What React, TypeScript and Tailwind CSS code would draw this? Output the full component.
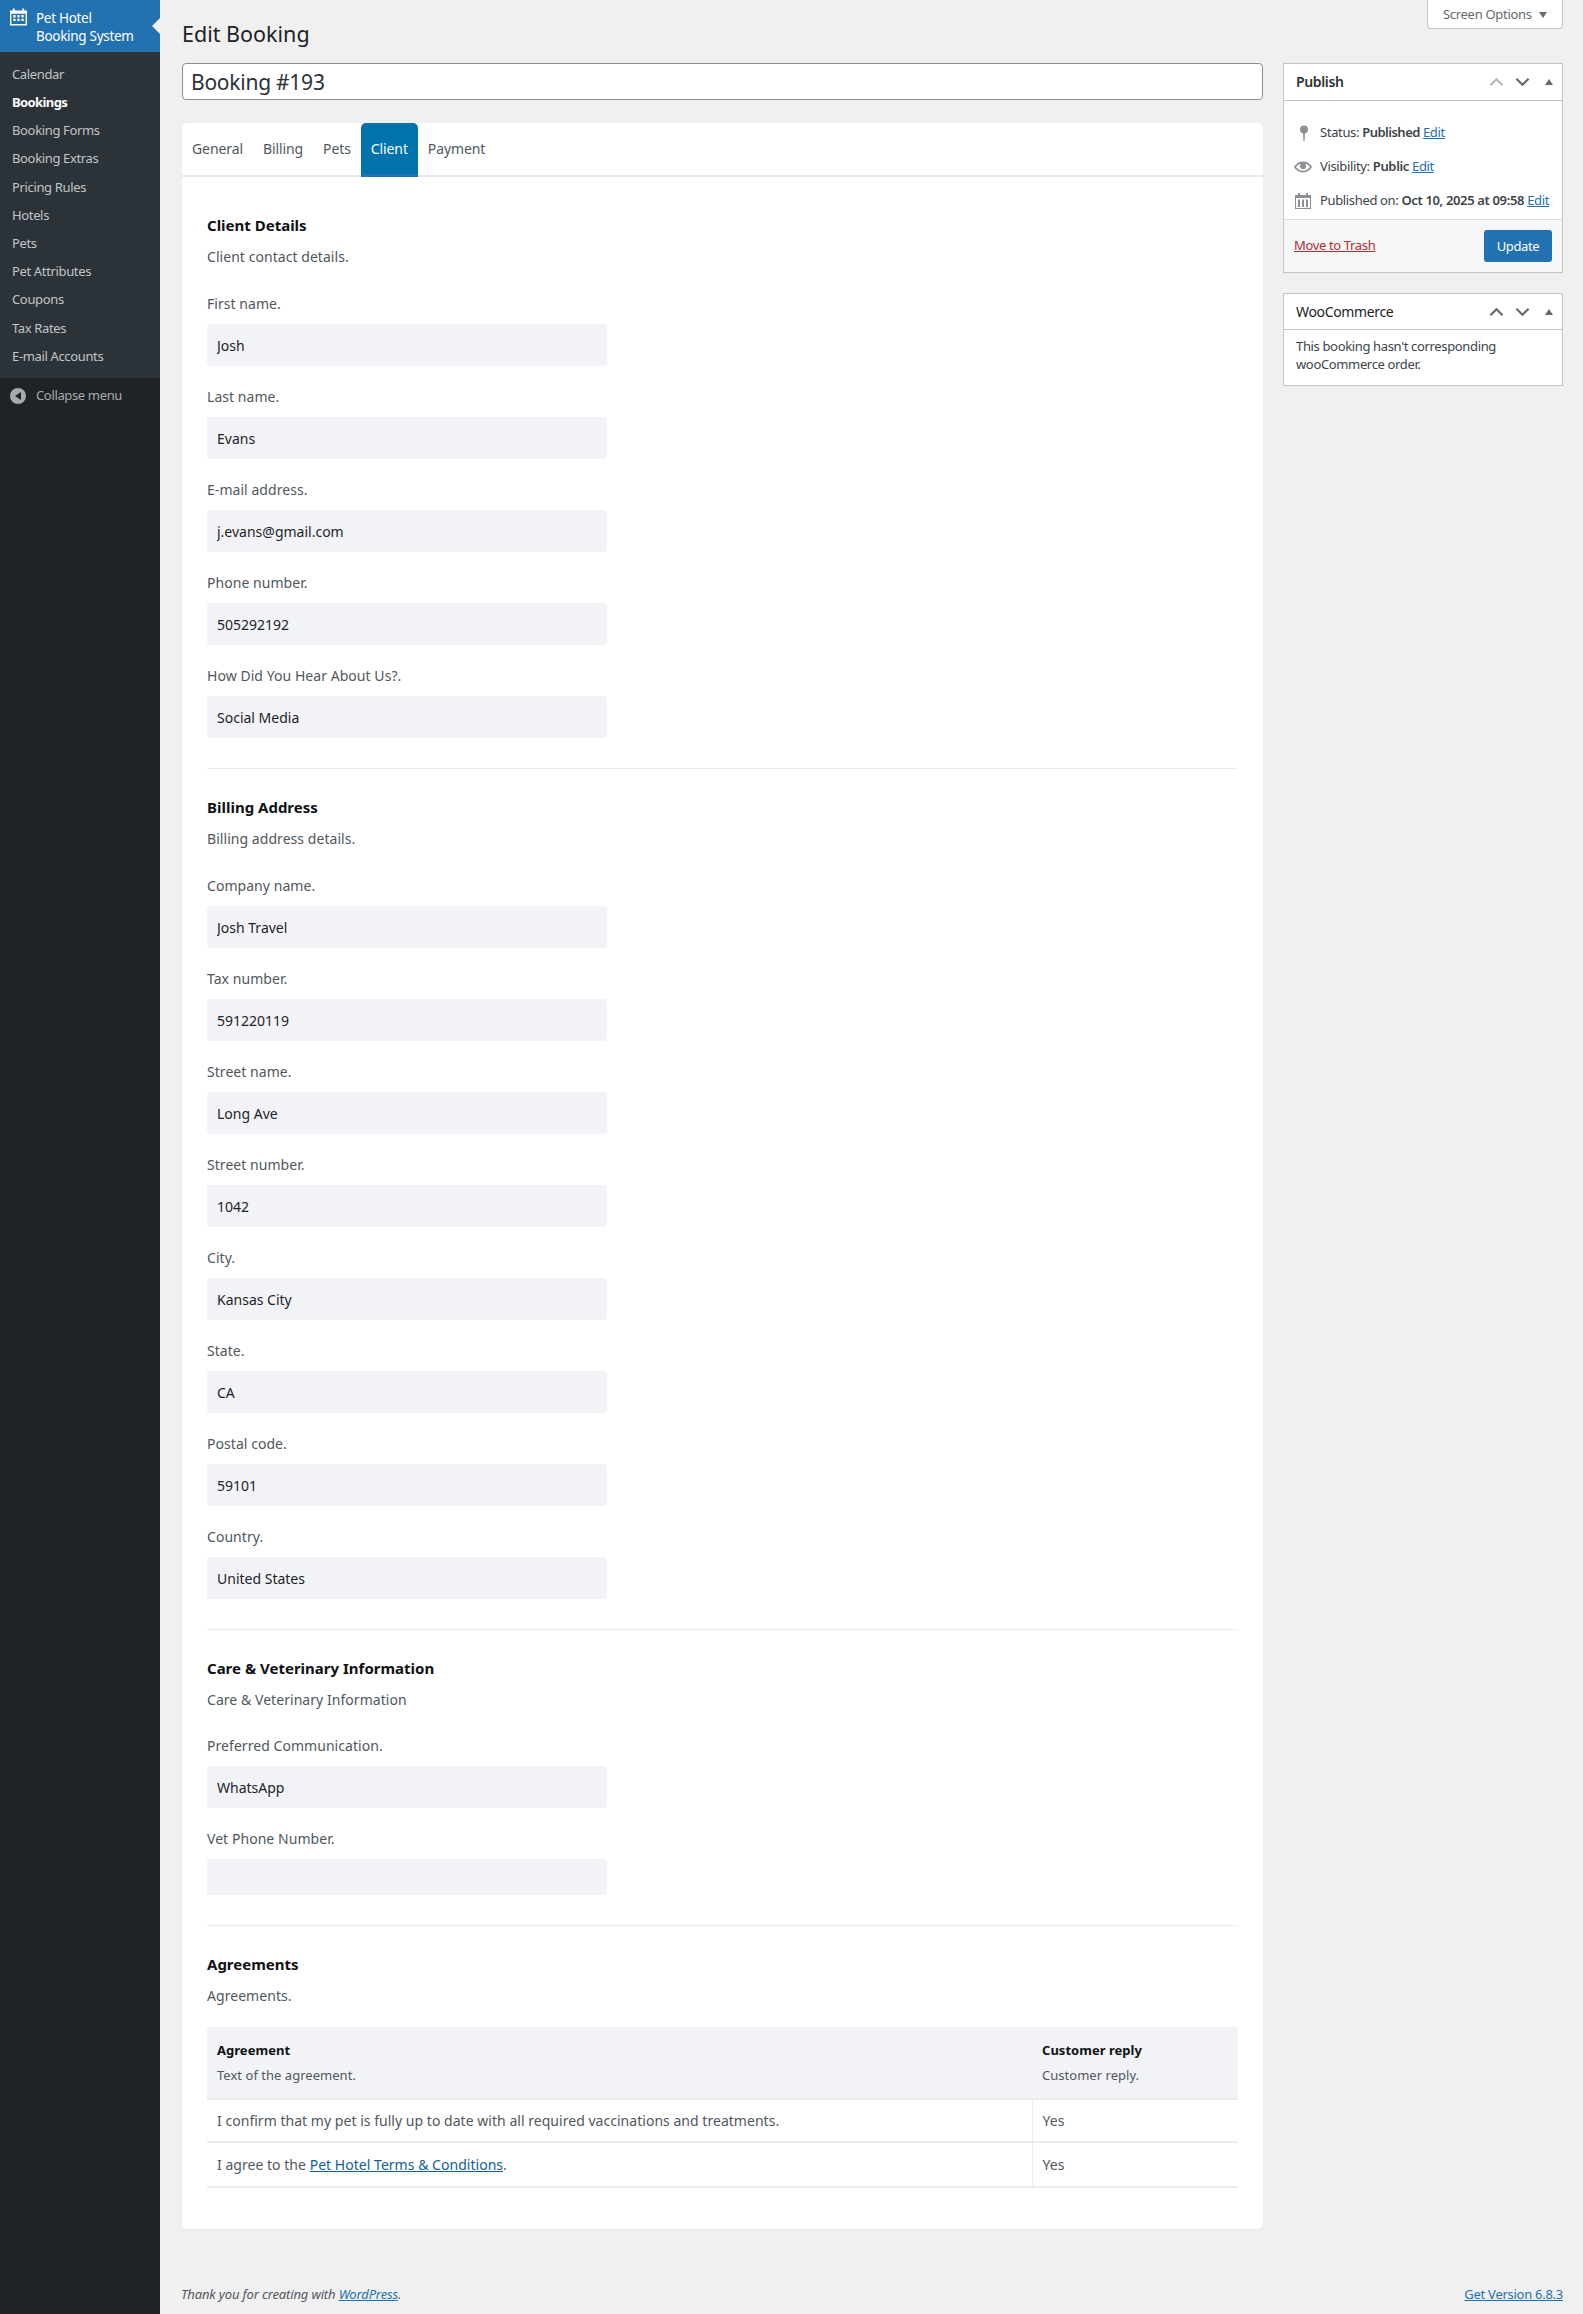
const font = { fontFamily: '"Noto Sans", sans-serif' };

const menu = ['Calendar', 'Bookings', 'Booking Forms', 'Booking Extras', 'Pricing Rules', 'Hotels', 'Pets', 'Pet Attributes', 'Coupons', 'Tax Rates', 'E-mail Accounts'];
const tabs = ['General', 'Billing', 'Pets', 'Client', 'Payment'];

const sections = [
  {
    title: 'Client Details',
    sub: 'Client contact details.',
    gap: 'mt-[27px] flex flex-col gap-[21px]',
    fields: [
      ['First name.', 'Josh'],
      ['Last name.', 'Evans'],
      ['E-mail address.', 'j.evans@gmail.com'],
      ['Phone number.', '505292192'],
      ['How Did You Hear About Us?.', 'Social Media'],
    ],
  },
  {
    title: 'Billing Address',
    sub: 'Billing address details.',
    gap: 'mt-[27px] flex flex-col gap-[21px]',
    fields: [
      ['Company name.', 'Josh Travel'],
      ['Tax number.', '591220119'],
      ['Street name.', 'Long Ave'],
      ['Street number.', '1042'],
      ['City.', 'Kansas City'],
      ['State.', 'CA'],
      ['Postal code.', '59101'],
      ['Country.', 'United States'],
    ],
  },
  {
    title: 'Care & Veterinary Information',
    sub: 'Care & Veterinary Information',
    gap: 'mt-[26px] flex flex-col gap-[21px]',
    fields: [
      ['Preferred Communication.', 'WhatsApp'],
      ['Vet Phone Number.', ''],
    ],
  },
];

function CalendarAlt({ className }: { className: string }) {
  return (
    <svg viewBox="1 1 18 18" className={className} fill="currentColor">
      <path fillRule="evenodd" d="M4 1h2v2h8V1h2v2h3v16H1V3h3V1zM2.500 6.500v11h15v-11h-15zM4.500 8h2.400v2.400H4.500zm4.300 0h2.400v2.400H8.800zm4.300 0h2.400v2.400h-2.400zM4.500 11.800h2.400v2.400H4.500zm4.300 0h2.400v2.400H8.800zm4.300 0h2.400v2.400h-2.400z" />
    </svg>
  );
}

function BoxControls({ dim }: { dim?: boolean }) {
  return (
    <div className="flex items-center">
      <svg viewBox="0 0 16 10" className={`w-[15px] h-[10px] ${dim ? 'text-[#b4b7ba]' : 'text-[#646970]'}`} fill="none" stroke="currentColor" strokeWidth="2.2">
        <path d="M1.500 8.500 8 2l6.500 6.500" />
      </svg>
      <svg viewBox="0 0 16 10" className="w-[15px] h-[10px] ml-[11px] text-[#646970]" fill="none" stroke="currentColor" strokeWidth="2.2">
        <path d="M1.500 1.500 8 8l6.500-6.500" />
      </svg>
      <svg viewBox="0 0 8 6" className="w-[8px] h-[6px] ml-[15px] mr-[9px] text-[#646970]" fill="currentColor">
        <path d="M4 0l4 6H0z" />
      </svg>
    </div>
  );
}

function Input({ value }: { value: string }) {
  return (
    <input
      readOnly
      value={value}
      style={font}
      className={`block w-[400px] ${value ? 'h-[42px]' : 'h-[36px]'} mt-[10px] rounded-[4px] bg-[#f2f3f7] px-[10px] text-[14px] text-[#1d2327] outline-none`}
    />
  );
}

function Heading({ title, sub }: { title: string; sub: string }) {
  return (
    <>
      <h3 className="text-[15px] leading-[17px] pb-[3px] font-bold text-[#0f1114]">{title}</h3>
      <p className="mt-[10px] text-[14px] leading-[20px] tracking-[0.05px] text-[#50575e]">{sub}</p>
    </>
  );
}

export default function App() {
  return (
    <div style={font} className="flex h-[2314px] w-full bg-[#f0f0f1] text-[13px] text-[#3c434a] overflow-hidden">
      <aside className="w-[160px] shrink-0 flex flex-col bg-[#1d2327]">
        <div className="relative h-[52px] bg-[#2271b1] flex text-white text-[13.5px] leading-[18px] tracking-[-0.3px]">
          <CalendarAlt className="w-[17px] h-[18px] mt-[8px] ml-[10px] text-white" />
          <div className="ml-[9px] mt-[9px]">Pet Hotel<br />Booking System</div>
          <span className="absolute right-0 top-[18px] border-y-[8px] border-r-[8px] border-y-transparent border-r-[#f0f0f1]" />
        </div>
        <nav className="bg-[#2c3338] py-[8px]">
          {menu.map((m) => (
            <div key={m} className={`h-[28.2px] px-[12px] pt-[1px] flex items-center text-[13px] ${m === 'Bookings' ? 'font-bold text-white tracking-[-0.6px]' : 'text-[#c3c4c7] tracking-[-0.35px]'}`}>
              {m}
            </div>
          ))}
        </nav>
        <div className="flex items-center h-[36px] pl-[10px] text-[#a7aaad] tracking-[-0.35px]">
          <span className="w-[16px] h-[16px] rounded-full bg-[#a7aaad] flex items-center justify-center">
            <span className="border-y-[4px] border-r-[6px] border-y-transparent border-r-[#1d2327] -ml-[1px]" />
          </span>
          <span className="ml-[10px]">Collapse menu</span>
        </div>
      </aside>

      <main className="flex-1 min-w-0 flex flex-col pl-[22px] pr-[20px]">
        <div className="flex justify-between h-[63px]">
          <h1 className="pt-[19px] text-[21.5px] leading-[30px] text-[#1d2327]">Edit Booking</h1>
          <div className="w-[136px] h-[29px] pt-[1px] bg-white border border-t-0 border-[#c3c4c7] rounded-b-[4px] flex items-center pl-[15px] text-[#646970] tracking-[-0.3px]">
            Screen Options
            <span className="ml-[7px] border-x-[4px] border-t-[6px] border-x-transparent border-t-[#646970]" />
          </div>
        </div>

        <div className="flex gap-[20px] items-start">
          <div className="w-[1081px] shrink-0">
            <input
              readOnly
              value="Booking #193"
              style={font}
              className="block w-full h-[37px] px-[8px] bg-white border border-[#8c8f94] rounded-[4px] text-[21px] tracking-[-0.25px] text-[#2c3338] outline-none"
            />

            <div className="mt-[23px] bg-white rounded-[5px] shadow-[0_1px_1px_rgba(0,0,0,0.04)]">
              <div className="flex h-[54px] border-b-2 border-[#e9eaee]">
                {tabs.map((t) => (
                  <div
                    key={t}
                    className={`h-[54px] px-[10px] flex items-center justify-center text-[14px] tracking-[-0.1px] ${t === 'Client' ? 'bg-[#0073aa] text-white rounded-t-[5px] border-b-[3px] border-[#2271b1]' : 'text-[#50575e] pb-[3px]'}`}
                  >
                    {t}
                  </div>
                ))}
              </div>

              <div className="px-[25px] pt-[40px] pb-[41px]">
                {sections.map((s) => (
                  <section key={s.title} className="border-b border-[#ebecef] pb-[30px] mb-[30px]">
                    <Heading title={s.title} sub={s.sub} />
                    <div className={s.gap}>
                      {s.fields.map(([label, value]) => (
                        <div key={label}>
                          <label className="block text-[14px] leading-[20px] tracking-[0.05px] text-[#50575e]">{label}</label>
                          <Input value={value} />
                        </div>
                      ))}
                    </div>
                  </section>
                ))}

                <Heading title="Agreements" sub="Agreements." />
                <table className="mt-[21px] w-full border-collapse text-[14px] tracking-[0.03px] text-[#50575e]">
                  <thead>
                    <tr className="bg-[#f2f3f7] h-[72px] border-b-2 border-[#ebecef]">
                      <th className="w-[825px] pl-[10px] text-left font-normal align-middle">
                        <div className="font-bold text-[13px] leading-[20px] text-[#0f1114]">Agreement</div>
                        <div className="mt-[5px] text-[13px] leading-[20px]">Text of the agreement.</div>
                      </th>
                      <th className="pl-[10px] text-left font-normal align-middle">
                        <div className="font-bold text-[13px] leading-[20px] text-[#0f1114]">Customer reply</div>
                        <div className="mt-[5px] text-[13px] leading-[20px]">Customer reply.</div>
                      </th>
                    </tr>
                  </thead>
                  <tbody>
                    <tr className="h-[43px] border-b-2 border-[#ebecef]">
                      <td className="pl-[10px] border-r border-[#ebecef]">I confirm that my pet is fully up to date with all required vaccinations and treatments.</td>
                      <td className="pl-[10px]">Yes</td>
                    </tr>
                    <tr className="h-[45px] border-b-2 border-[#ebecef]">
                      <td className="pl-[10px] border-r border-[#ebecef]">
                        I agree to the <a className="text-[#135e96] underline">Pet Hotel Terms &amp; Conditions</a>.
                      </td>
                      <td className="pl-[10px]">Yes</td>
                    </tr>
                  </tbody>
                </table>
              </div>
            </div>
          </div>

          <div className="w-[280px] shrink-0 flex flex-col gap-[20px] tracking-[-0.35px]">
            <div className="bg-white border border-[#c3c4c7]">
              <div className="h-[37px] flex items-center justify-between pl-[12px] border-b border-[#c3c4c7]">
                <span className="pb-[2px] text-[14px] font-semibold text-[#2c3338]">Publish</span>
                <BoxControls dim />
              </div>
              <div className="h-[118px] pt-[14px] text-[#3c434a]">
                <div className="h-[35px] flex items-center">
                  <svg viewBox="0 0 10 16" className="w-[10px] h-[16px] ml-[15px] mr-[11px] text-[#8c8f94]" fill="currentColor">
                    <circle cx="5" cy="4.500" r="4" />
                    <path d="M4 8h2l-.4 8h-1.200z" />
                  </svg>
                  <span>Status: <b className="font-semibold tracking-[-0.5px]">Published</b> <a className="text-[#2271b1] underline">Edit</a></span>
                </div>
                <div className="h-[34px] flex items-center">
                  <svg viewBox="0 0 20 20" className="w-[18px] h-[18px] ml-[10px] mr-[8px] text-[#8c8f94]" fill="currentColor">
                    <path d="M19.700 9.400C17.700 6 14 3.900 10 3.900S2.300 6 .3 9.400L0 10l.3.6c2 3.400 5.700 5.500 9.700 5.500s7.700-2.100 9.700-5.500l.3-.6-.3-.6zM10 14.100c-3.100 0-6-1.600-7.700-4.100C3.600 8 5.700 6.600 8 6.100c-.9.6-1.500 1.700-1.500 2.900 0 1.900 1.600 3.500 3.500 3.500s3.500-1.600 3.500-3.500c0-1.200-.6-2.300-1.500-2.900 2.300.5 4.400 1.900 5.700 3.900-1.700 2.500-4.600 4.100-7.700 4.100z" />
                  </svg>
                  <span>Visibility: <b className="font-semibold">Public</b> <a className="text-[#2271b1] underline">Edit</a></span>
                </div>
                <div className="h-[33px] flex items-center">
                  <svg viewBox="0 0 16 16" className="w-[16px] h-[16px] ml-[11px] mr-[9px] text-[#8c8f94]" fill="currentColor">
                    <path fillRule="evenodd" d="M3 0h2v2h6V0h2v2h3v14H0V2h3V0zM1 5v10h14V5H1zm2 1.500h2V14H3zm4 0h2V14H7zm4 0h2V14h-2z" />
                  </svg>
                  <span className="whitespace-nowrap">Published on: <b className="font-semibold">Oct 10, 2025 at 09:58</b> <a className="text-[#2271b1] underline">Edit</a></span>
                </div>
              </div>
              <div className="h-[53px] flex items-center justify-between pl-[10px] pr-[10px] bg-[#f6f7f7] border-t border-[#dcdcde]">
                <a className="text-[#b32d2e] underline">Move to Trash</a>
                <span className="w-[68px] h-[32px] pt-[1px] rounded-[3px] bg-[#2271b1] text-white flex items-center justify-center">Update</span>
              </div>
            </div>

            <div className="bg-white border border-[#c3c4c7]">
              <div className="h-[36px] flex items-center justify-between pl-[12px] border-b border-[#c3c4c7]">
                <span className="text-[14px] text-[#1d2327]">WooCommerce</span>
                <BoxControls />
              </div>
              <p className="pl-[12px] pr-[12px] pt-[7px] pb-[12px] leading-[18px]">This booking hasn't corresponding wooCommerce order.</p>
            </div>
          </div>
        </div>

        <footer className="mt-auto -ml-[1px] pb-[10px] flex justify-between leading-[20px] text-[#50575e]">
          <span className="italic tracking-[-0.15px]">Thank you for creating with <a className="text-[#2271b1] underline">WordPress</a>.</span>
          <a className="text-[#2271b1] underline tracking-[-0.27px]">Get Version 6.8.3</a>
        </footer>
      </main>
    </div>
  );
}
